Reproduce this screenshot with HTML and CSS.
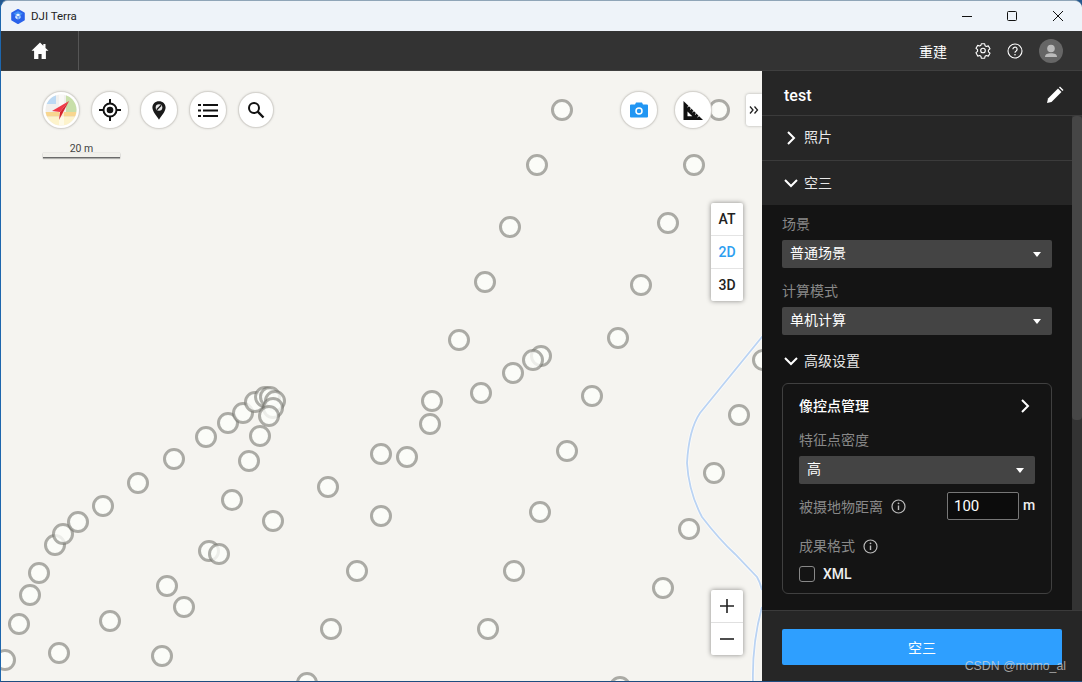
FILE: index.html
```html
<!DOCTYPE html>
<html lang="zh-CN">
<head>
<meta charset="utf-8">
<title>DJI Terra</title>
<link rel="stylesheet" href="styles.css">
</head>
<body>
<div class="window">
  <header class="titlebar">
    <svg class="logo" viewBox="0 0 16 16"><path d="M8 1.300 14 4.700v6.600L8 14.700 2 11.300V4.700Z" fill="#2a62ea" stroke="#2a62ea" stroke-width="1.600" stroke-linejoin="round"/><path d="M8 2.600 12.800 5.300 8 8 3.200 5.300Z" fill="#3f8ff6"/><path d="M8 5 10.500 6.400 8 7.900 5.500 6.400Z" fill="#eaf5ff"/><path d="M5.300 7 7.600 8.300v2.600L5.300 9.600Z" fill="#d6ebff"/><path d="M10.700 7 8.400 8.300v2.600l2.300-1.300Z" fill="#9ccdfc"/></svg>
    <span class="app-name">DJI Terra</span>
    <div class="win-controls">
      <span class="win-btn"><svg width="12" height="12" viewBox="0 0 12 12"><path d="M2 6.500h10" stroke="#111" fill="none"/></svg></span>
      <span class="win-btn"><svg width="12" height="12" viewBox="0 0 12 12"><rect x="1.500" y="1.500" width="9" height="9" rx="1" stroke="#111" fill="none"/></svg></span>
      <span class="win-btn"><svg width="12" height="12" viewBox="0 0 12 12"><path d="M1 1l10 10M11 1 1 11" stroke="#111" fill="none"/></svg></span>
    </div>
  </header>
  <nav class="toolbar">
    <div class="home-cell"><svg width="20" height="20" viewBox="0 0 20 20"><path d="M10 1.500 1.500 9.800h2.600V18h4.300v-5h3.200v5h4.300V9.800h2.600L15.500 7V3h-2.200v1.800Z" fill="#fff"/></svg></div>
    <div class="toolbar-right">
      <span class="rebuild">重建</span>
      <svg class="tb-icon gear" width="16" height="16" viewBox="0 0 16 16"><path d="M6.300.8h3.400l.4 2 1.200.7 2-.6 1.700 2.900-1.600 1.400v1.600l1.600 1.400-1.700 2.900-2-.6-1.200.7-.4 2H6.300l-.4-2-1.200-.7-2 .6L1 9.700l1.600-1.400V6.700L1 5.300l1.700-2.900 2 .6 1.200-.7Z" fill="none" stroke="#fff" stroke-width="1.100" stroke-linejoin="round"/><circle cx="8" cy="7.500" r="2.300" fill="none" stroke="#fff" stroke-width="1.100"/></svg>
      <svg class="tb-icon help" width="16" height="16" viewBox="0 0 16 16"><circle cx="8" cy="8" r="7" fill="none" stroke="#fff" stroke-width="1.100"/><path d="M5.900 6.200a2.100 2.100 0 1 1 3.300 1.700c-.8.500-1.200.9-1.200 1.800" fill="none" stroke="#fff" stroke-width="1.200"/><circle cx="8" cy="11.700" r=".8" fill="#fff"/></svg>
      <svg class="avatar" width="24" height="24" viewBox="0 0 24 24"><circle cx="12" cy="12" r="12" fill="#666"/><circle cx="12" cy="9.500" r="3.800" fill="#bbb"/><path d="M6 18c0-3 2.500-3.800 6-3.800s6 .8 6 3.800Z" fill="#bbb"/></svg>
    </div>
  </nav>
  <div class="main">
    <section class="map">
      <svg class="map-canvas" viewBox="1 71 761 610" width="761" height="610">
        <path class="river-case" d="M766 332 700 413C692 425 688 445 687 463C688 480 693 500 702 517C712 530 722 542 735 554L757 577C760 582 761 586 762 590M762 607C757 625 752 650 753 684"/>
        <path class="river" d="M766 332 700 413C692 425 688 445 687 463C688 480 693 500 702 517C712 530 722 542 735 554L757 577C760 582 761 586 762 590M762 607C757 625 752 650 753 684"/>
        <g class="pts">
          <circle cx="562" cy="110" r="9.500"/><circle cx="719" cy="110" r="9.500"/><circle cx="537" cy="165" r="9.500"/><circle cx="694" cy="165" r="9.500"/><circle cx="510" cy="227" r="9.500"/><circle cx="668" cy="223" r="9.500"/><circle cx="485" cy="282" r="9.500"/><circle cx="641" cy="285" r="9.500"/><circle cx="459" cy="340" r="9.500"/><circle cx="618" cy="338" r="9.500"/><circle cx="541" cy="356" r="9.500"/><circle cx="533" cy="360" r="9.500"/><circle cx="513" cy="373" r="9.500"/><circle cx="481" cy="393" r="9.500"/><circle cx="592" cy="396" r="9.500"/><circle cx="432" cy="401" r="9.500"/><circle cx="430" cy="424" r="9.500"/><circle cx="739" cy="415" r="9.500"/><circle cx="763" cy="360" r="9.500"/><circle cx="381" cy="454" r="9.500"/><circle cx="407" cy="457" r="9.500"/><circle cx="567" cy="451" r="9.500"/><circle cx="714" cy="473" r="9.500"/><circle cx="328" cy="487" r="9.500"/><circle cx="381" cy="516" r="9.500"/><circle cx="540" cy="512" r="9.500"/><circle cx="689" cy="529" r="9.500"/><circle cx="357" cy="571" r="9.500"/><circle cx="514" cy="571" r="9.500"/><circle cx="663" cy="588" r="9.500"/><circle cx="331" cy="629" r="9.500"/><circle cx="488" cy="629" r="9.500"/><circle cx="620" cy="687" r="9.500"/><circle cx="307" cy="683" r="9.500"/>
          <circle cx="5" cy="660" r="9.500"/><circle cx="19" cy="624" r="9.500"/><circle cx="30" cy="595" r="9.500"/><circle cx="39" cy="573" r="9.500"/><circle cx="55" cy="545" r="9.500"/><circle cx="63" cy="534" r="9.500"/><circle cx="78" cy="522" r="9.500"/><circle cx="103" cy="506" r="9.500"/><circle cx="138" cy="483" r="9.500"/><circle cx="174" cy="459" r="9.500"/><circle cx="206" cy="437" r="9.500"/><circle cx="228" cy="423" r="9.500"/><circle cx="243" cy="413" r="9.500"/><circle cx="255" cy="402" r="9.500"/><circle cx="265" cy="397" r="9.500"/><circle cx="270" cy="397" r="9.500"/><circle cx="275" cy="401" r="9.500"/><circle cx="273" cy="408" r="9.500"/><circle cx="269" cy="416" r="9.500"/><circle cx="260" cy="436" r="9.500"/><circle cx="249" cy="461" r="9.500"/><circle cx="232" cy="500" r="9.500"/><circle cx="273" cy="521" r="9.500"/><circle cx="209" cy="551" r="9.500"/><circle cx="219" cy="554" r="9.500"/><circle cx="167" cy="586" r="9.500"/><circle cx="184" cy="607" r="9.500"/><circle cx="110" cy="621" r="9.500"/><circle cx="59" cy="653" r="9.500"/><circle cx="162" cy="656" r="9.500"/>
        </g>
      </svg>

      <div class="tools">
        <span class="tool"><svg width="34" height="34" viewBox="0 0 34 34"><defs><clipPath id="cmp"><circle cx="17" cy="17" r="15.500"/></clipPath></defs><g clip-path="url(#cmp)"><rect width="34" height="34" fill="#f1f0ee"/><path d="M1 0h11v11H1Z" fill="#bcd9f3"/><path d="M22 0h12v19H22Z" fill="#c8dfa9"/><path d="M0 24h34v10H0Z" fill="#fdf3cb"/><path d="M0 19h34v4.500H0Z" fill="#f8d68f"/><path d="M15 0h5v34h-5Z" fill="#fff" opacity=".55"/></g><path d="M25 8 8 18l8 1Z" fill="#f03a48"/><path d="M25 8 16 19l-1 8Z" fill="#d4242f"/></svg></span>
        <span class="tool"><svg width="24" height="24" viewBox="0 0 24 24"><circle cx="12" cy="12" r="6.500" fill="none" stroke="#111" stroke-width="2"/><circle cx="12" cy="12" r="3.300" fill="#111"/><path d="M12 1v4.500M12 18.500V23M1 12h4.500M18.500 12H23" stroke="#111" stroke-width="2"/></svg></span>
        <span class="tool"><svg width="14" height="19" viewBox="0 0 14 19"><path d="M7 .3C3.200.3.400 3 .400 6.500c0 4.200 4.300 8.200 6.600 12.300 2.300-4.100 6.600-8.100 6.600-12.300C13.600 3 10.800.3 7 .3Z" fill="#1a1a1a"/><circle cx="7" cy="6.500" r="3.300" fill="#e8e8e8"/><path d="M4.800 8.800 9.200 4.200" stroke="#1a1a1a" stroke-width="1.400"/></svg></span>
        <span class="tool"><svg width="20" height="15" viewBox="0 0 20 15"><path d="M0 1h3v2H0ZM0 6.500h3v2H0ZM0 12h3v2H0Z" fill="#111"/><path d="M5 1h15v2H5ZM5 6.500h15v2H5ZM5 12h15v2H5Z" fill="#111"/></svg></span>
        <span class="tool small"><svg width="17" height="17" viewBox="0 0 17 17"><circle cx="6" cy="6" r="5" fill="none" stroke="#111" stroke-width="2"/><path d="M9.700 9.700 15.500 15.500" stroke="#111" stroke-width="2.400"/></svg></span>
      </div>

      <div class="scale"><span class="scale-text">20 m</span><div class="scale-bar"></div></div>

      <div class="tools-right">
        <span class="tool"><svg width="18" height="16" viewBox="0 0 18 16"><path d="M1 2.500h4L6 .5h6l1 2h4a1 1 0 0 1 1 1v11a1 1 0 0 1-1 1H1a1 1 0 0 1-1-1v-11a1 1 0 0 1 1-1Z" fill="#2196f3"/><circle cx="9" cy="9" r="3" fill="#2196f3" stroke="#fff" stroke-width="1.500"/></svg></span>
        <span class="tool"><svg width="20" height="19" viewBox="0 0 20 19"><path d="M.5 0v19H20Z" fill="#111"/><path d="M4.500 10.500v4.700h4.800Z" fill="#fff"/><path d="M5 4 6.500 2.700M7.500 6.500 9 5.200M10 9l1.500-1.300M12.500 11.500l1.500-1.300M15 14l1.500-1.300" stroke="#fff" stroke-width="1" transform="translate(-.5 2)"/></svg></span>
      </div>

      <button class="collapse"><svg width="10" height="8" viewBox="0 0 10 8"><path d="M1 .5 4 4 1 7.500M5.500.5 8.500 4l-3 3.500" fill="none" stroke="#222" stroke-width="1.300"/></svg></button>

      <div class="view-switch">
        <span class="view-btn">AT</span>
        <span class="view-btn active">2D</span>
        <span class="view-btn">3D</span>
      </div>

      <div class="zoom-ctl">
        <span class="zoom-btn"><svg width="14" height="14" viewBox="0 0 14 14"><path d="M0 7h14M7 0v14" stroke="#222" stroke-width="1.600"/></svg></span>
        <span class="zoom-btn"><svg width="14" height="14" viewBox="0 0 14 14"><path d="M0 7h14" stroke="#222" stroke-width="1.600"/></svg></span>
      </div>
    </section>

    <aside class="panel">
      <div class="panel-head">
        <span class="project">test</span>
        <svg width="18" height="18" viewBox="0 0 18 18"><path d="M1 17l1-4.500L12 2.500l3.500 3.500-10 10Z" fill="#fff"/><path d="M13 1.500l1-1 3.500 3.500-1 1Z" fill="#fff"/></svg>
      </div>
      <div class="panel-body">
        <div class="panel-scroll">
          <div class="section-row bordered"><svg class="chev" width="10" height="14" viewBox="0 0 10 14"><path d="M2 1l6 6-6 6" fill="none" stroke="#fff" stroke-width="2"/></svg><span class="cjk">照片</span></div>
          <div class="section-row"><svg class="chev" width="14" height="10" viewBox="0 0 14 10"><path d="M1 2l6 6 6-6" fill="none" stroke="#fff" stroke-width="2"/></svg><span class="cjk">空三</span></div>
          <div class="section-content">
            <div class="field-label first">场景</div>
            <div class="select"><span class="cjk">普通场景</span><i class="caret"></i></div>
            <div class="field-label second">计算模式</div>
            <div class="select"><span class="cjk">单机计算</span><i class="caret"></i></div>
            <div class="adv-row"><svg class="chev" width="14" height="10" viewBox="0 0 14 10"><path d="M1 2l6 6 6-6" fill="none" stroke="#fff" stroke-width="2"/></svg><span class="cjk">高级设置</span></div>
            <div class="card">
              <div class="card-title"><span class="cjk">像控点管理</span><svg width="10" height="14" viewBox="0 0 10 14"><path d="M2 1l6 6-6 6" fill="none" stroke="#fff" stroke-width="2"/></svg></div>
              <div class="field-label density">特征点密度</div>
              <div class="select"><span class="cjk">高</span><i class="caret"></i></div>
              <div class="distance">
                <span class="label-inline">被摄地物距离</span>
                <svg class="info" width="15" height="15" viewBox="0 0 15 15"><circle cx="7.500" cy="7.500" r="6.500" fill="none" stroke="#bbb" stroke-width="1.200"/><path d="M7.500 6.500v4.500" stroke="#bbb" stroke-width="1.400"/><circle cx="7.500" cy="4.300" r=".9" fill="#bbb"/></svg>
                <span class="num-input">100</span>
                <span class="unit">m</span>
              </div>
              <div class="format"><span class="label-inline cjk">成果格式</span><svg class="info" width="15" height="15" viewBox="0 0 15 15"><circle cx="7.500" cy="7.500" r="6.500" fill="none" stroke="#bbb" stroke-width="1.200"/><path d="M7.500 6.500v4.500" stroke="#bbb" stroke-width="1.400"/><circle cx="7.500" cy="4.300" r=".9" fill="#bbb"/></svg></div>
              <div class="check-row"><i class="checkbox"></i><span>XML</span></div>
            </div>
          </div>
        </div>
        <div class="scrollbar"><div class="thumb"></div></div>
      </div>
      <div class="panel-foot"><button class="primary">空三</button></div>
    </aside>
  </div>
  <span class="watermark">CSDN @momo_al</span>
</div>
</body>
</html>
```
FILE: styles.css
```css
* { box-sizing: border-box; }
html, body { margin: 0; height: 100%; overflow: hidden; background: #24588f; }
body { font-family: Roboto, "Noto Sans CJK SC", sans-serif; font-size: 14px; }
.window { position: relative; height: 682px; display: flex; flex-direction: column; border-top: 1px solid #8fa5b8; border-left: 1px solid #1d66ad; border-bottom: 1px solid #1f4d80; border-radius: 8px 8px 0 0; overflow: hidden; background: #f5f4f0; }
.cjk { display: block; line-height: 18px; font-family: "Noto Sans CJK SC", sans-serif; }

.titlebar { flex: none; height: 30px; background: #eef3f9; display: flex; align-items: center; padding-left: 9px; }
.logo { width: 16px; height: 17px; margin-right: 5px; }
.app-name { font-family: Roboto, sans-serif; font-size: 11.500px; color: #222; }
.win-controls { margin-left: auto; display: flex; height: 100%; padding-right: 1px; }
.win-btn { width: 46px; display: flex; align-items: center; justify-content: center; padding-bottom: 1px; }

.toolbar { flex: none; height: 40px; background: #333; display: flex; align-items: center; border-bottom: 1px solid #3f3f3f; }
.home-cell { width: 78px; height: 100%; display: flex; align-items: center; justify-content: center; border-right: 1px solid #555; }
.toolbar-right { margin-left: auto; display: flex; align-items: center; padding-right: 19px; }
.rebuild { color: #fff; font-size: 14px; margin-right: 28px; }
.gear { margin-right: 16px; }
.help { margin-right: 16px; }

.main { flex: 1; min-height: 0; display: flex; }
.map { position: relative; width: 761px; flex: none; overflow: hidden; background: #f5f4f0; }
.map-canvas { position: absolute; left: 0; top: 0; display: block; }
.river-case { fill: none; stroke: #fff; stroke-width: 3.500; opacity: .6; }
.river { fill: none; stroke: #bad3f3; stroke-width: 1.800; }
.pts circle { fill: rgba(253,254,250,.8); stroke: rgba(115,115,108,.58); stroke-width: 3; }

.tools { position: absolute; left: 42px; top: 21px; display: flex; align-items: center; gap: 13px; }
.tools-right { position: absolute; left: 620px; top: 21px; display: flex; align-items: center; gap: 18px; }
.tool { width: 36px; height: 36px; border-radius: 50%; background: #fff; display: flex; align-items: center; justify-content: center; box-shadow: 0 0 0 1px #d6d4cf, 0 0 3px rgba(0,0,0,.3); }
.tool.small { width: 34px; height: 34px; }

.scale { position: absolute; left: 42px; top: 72px; width: 77px; display: flex; flex-direction: column; align-items: center; }
.scale-text { font-size: 10.500px; line-height: 12px; color: #444; margin-bottom: -2px; position: relative; }
.scale-bar { width: 100%; height: 5px; background: #f1f0eb; border-bottom: 1px solid #6a6a6a; box-shadow: 0 0 1px rgba(0,0,0,.25), 0 1px 1px rgba(0,0,0,.25); }

.collapse { position: absolute; right: 0; top: 23px; width: 16px; height: 32px; padding: 0; border: 0; border-radius: 3px 0 0 3px; background: #fff; box-shadow: 0 0 3px rgba(0,0,0,.3); display: flex; align-items: center; justify-content: center; }

.view-switch { position: absolute; left: 710px; top: 132px; width: 32px; background: #fff; border-radius: 2px; box-shadow: 0 0 5px rgba(0,0,0,.45); display: flex; flex-direction: column; }
.view-btn { height: 33px; display: flex; align-items: center; justify-content: center; font-size: 14px; font-weight: 500; color: #222; border-top: 1px solid #e4e4e4; }
.view-btn:first-child { border-top: 0; height: 32px; }
.view-btn.active { color: #2d9ef0; }

.zoom-ctl { position: absolute; left: 710px; top: 519px; width: 32px; background: #fff; border-radius: 2px; box-shadow: 0 0 5px rgba(0,0,0,.45); display: flex; flex-direction: column; }
.zoom-btn { height: 33px; display: flex; align-items: center; justify-content: center; border-top: 1px solid #e0e0e0; }
.zoom-btn:first-child { border-top: 0; height: 32px; }

.panel { position: relative; flex: 1; min-width: 0; display: flex; flex-direction: column; background: #262626; color: #fff; }
.panel-head { flex: none; height: 45px; display: flex; align-items: center; justify-content: space-between; padding: 4px 18px 0 22px; border-bottom: 1px solid #3b3b3b; }
.project { font-size: 16px; font-weight: 500; }
.panel-body { flex: 1; min-height: 0; display: flex; }
.panel-scroll { flex: 1; min-width: 0; overflow: hidden; background: #262626; }
.scrollbar { flex: none; width: 10px; background: #333; }
.thumb { height: 304px; background: #464646; border-radius: 4px; }
.section-row { height: 44px; display: flex; align-items: center; padding-left: 22px; color: #e8e8e8; font-size: 14px; }
.section-row .cjk { margin-top: -3px; }
.section-row.bordered { height: 45px; border-bottom: 1px solid #3b3b3b; }
.section-row.bordered .cjk { margin-top: -5px; }
.chev { width: 14px; margin-right: 6px; flex: none; }
.section-content { background: #141414; padding: 9px 20px 0; height: 405px; }

.field-label { height: 20px; line-height: 20px; color: #888; font-size: 14px; }
.field-label.second { margin-top: 13px; }
.field-label.density { margin-top: 14px; }
.select { margin-top: 6px; height: 28px; background: #444; border-radius: 2px; display: flex; align-items: center; justify-content: space-between; padding: 0 11px 0 8px; color: #fff; font-size: 14px; }
.select .cjk { margin-top: -5px; }
.caret { width: 0; height: 0; border-left: 4px solid transparent; border-right: 4px solid transparent; border-top: 5px solid #fff; margin-top: 1px; }
.adv-row { margin-top: 16px; height: 20px; display: flex; align-items: center; padding-left: 2px; color: #e8e8e8; font-size: 14px; }
.adv-row .cjk { margin-top: -2px; }
.card { margin-top: 12px; height: 211px; border: 1px solid #404040; border-radius: 6px; padding: 12px 16px 0; }
.card-title { height: 20px; display: flex; align-items: center; justify-content: space-between; padding-right: 5px; color: #fff; font-weight: 500; }
.card-title .cjk { margin-top: -2px; }
.distance { margin-top: 8px; height: 28px; display: flex; align-items: center; }
.label-inline { color: #888; font-size: 14px; }
.info { margin-left: 8px; }
.num-input { margin-left: auto; width: 72px; height: 28px; border: 1px solid #777; border-radius: 2px; background: #0c0c0c; color: #fff; font-size: 15px; line-height: 26px; padding-left: 6px; }
.unit { margin-left: 4px; width: 12px; font-size: 14px; font-weight: 500; color: #eee; padding-bottom: 3px; }
.format { margin-top: 16px; height: 20px; display: flex; align-items: center; }
.format .cjk { margin-top: -2px; }
.check-row { margin-top: 8px; height: 20px; display: flex; align-items: center; color: #eee; font-weight: 500; }
.checkbox { width: 16px; height: 16px; border: 1px solid #888; border-radius: 3px; margin: 0 8px 0 0; }

.panel-foot { flex: none; height: 71px; padding: 18px 20px 0; border-top: 1px solid #3b3b3b; }
.primary { width: 280px; height: 36px; border: 0; border-radius: 2px; background: #2e9fff; color: #fff; font-family: inherit; font-size: 14px; padding: 0; }

.watermark { position: absolute; right: 16px; bottom: 7px; font-family: "Liberation Sans", sans-serif; font-size: 12.300px; line-height: 16px; color: rgba(215,215,215,.72); }
```
